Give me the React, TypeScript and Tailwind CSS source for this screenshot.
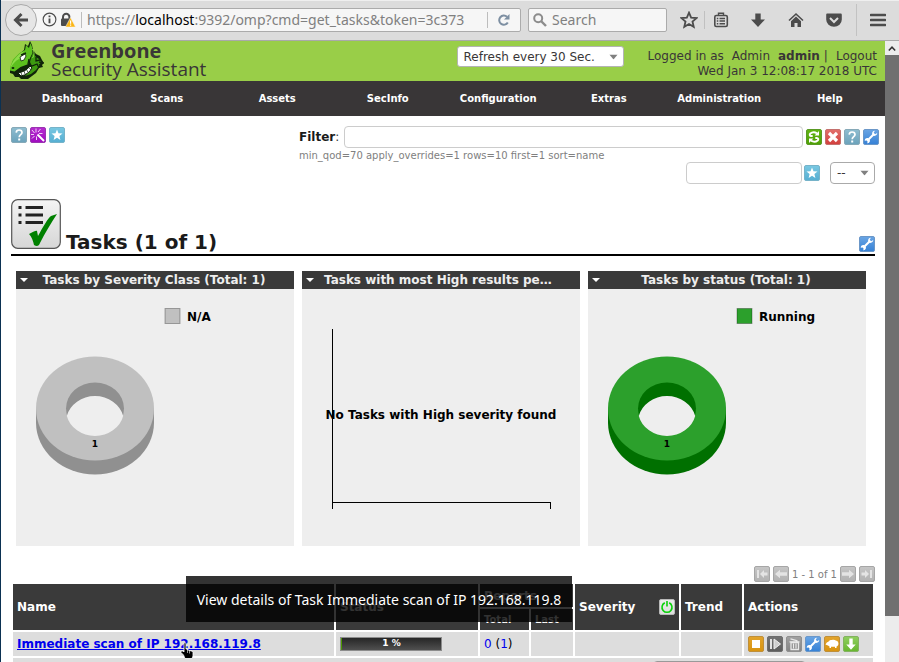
import React from "react";

type IconName =
  | "help" | "wizard" | "star" | "refresh" | "delete" | "wrench"
  | "first" | "prev" | "next" | "last"
  | "power" | "stop" | "resume" | "trash" | "clone" | "download";

const fills: Record<IconName, [string, string, string]> = {
  help: ["#8fbdd0", "#6ba2bb", "#86a9b8"],
  wizard: ["#b52bd0", "#a00cc0", "#9a35b0"],
  star: ["#79c8e2", "#56aed2", "#76b3c9"],
  refresh: ["#62b414", "#4fa005", "#5a9a25"],
  delete: ["#e2706c", "#d23f3c", "#c4716e"],
  wrench: ["#6aa5e4", "#3581d6", "#6b97c8"],
  first: ["#c6c6c6", "#b2b2b2", "#a6a6a6"],
  prev: ["#c6c6c6", "#b2b2b2", "#a6a6a6"],
  next: ["#c6c6c6", "#b2b2b2", "#a6a6a6"],
  last: ["#c6c6c6", "#b2b2b2", "#a6a6a6"],
  power: ["#ececec", "#dedede", "#b9b9b9"],
  stop: ["#e2a42c", "#d8930f", "#bf8f3a"],
  resume: ["#747474", "#5c5c5c", "#6e6e6e"],
  trash: ["#a2a2a2", "#858585", "#909090"],
  clone: ["#e2a42c", "#d8930f", "#bf8f3a"],
  download: ["#8fcf60", "#67b62e", "#83b261"],
};

const glyphs: Record<IconName, React.ReactNode> = {
  help: <g><path d="M5.2 5.6C5.3 3.9 6.4 3 8.1 3c1.700 0 2.900 1 2.900 2.500C11 7.600 8.200 7.700 8.200 10.200" fill="none" stroke="#fff" strokeWidth="1.700" /><rect x="7.200" y="11.500" width="2" height="2" fill="#fff" /></g>,
  wizard: <g stroke="#fff" fill="none"><path d="M7.500 7.500l6.500 6.500" strokeWidth="2" /><path d="M6 5.500V1.500M4.500 6L2 3M4 7.500H1M4.500 9L2 11.500M6.500 9.500V13M8 5l2.500-3M9 6.500h3.500" strokeWidth="1" strokeOpacity=".8" /></g>,
  star: <path d="M8 2.600l1.500 3.600 4 .3-3.100 2.500 1 3.900L8 10.800l-3.400 2.100 1-3.900-3.100-2.500 4-.3z" fill="#fff" />,
  refresh: <g fill="none" stroke="#fff" strokeWidth="2"><path d="M11 4.300C9 3.200 6 3.200 4.300 4.600c-1 .9-.5 2.500.8 2.500h1.600" /><path d="M5 11.700c2 1.100 5 1.100 6.700-.3 1-.9.500-2.500-.8-2.500H9.300" /><path d="M13 2v4.600H8.600zM3 14V9.400h4.400z" fill="#fff" stroke="none" /></g>,
  delete: <path d="M4 4l8 8M12 4l-8 8" stroke="#fff" strokeWidth="3.200" />,
  wrench: <g><path d="M4.200 11.800L11 5" stroke="#fff" strokeWidth="2" /><path d="M11.900 1.800c-1.900 0-3.200 1.600-2.700 3.600l1.400 1.400c2 .5 3.700-.9 3.600-2.700l-2 1.200-1.500-1.500zM4.800 9c-1.800-.3-3.300 1.100-3 3l1.500-.8 1.500 1.500-.8 1.500c1.900.3 3.300-1.300 2.900-3.100z" fill="#fff" /></g>,
  first: <path d="M3 4h2v8H3zM6 8l4-4v2.500h3.500v3H10V12z" fill="#e4e4e4" />,
  prev: <path d="M2 8l5-4.200v2.500h7v3.400H7v2.500z" fill="#e4e4e4" />,
  next: <path d="M14 8L9 3.800v2.500H2v3.400h7v2.500z" fill="#e4e4e4" />,
  last: <path d="M11 4h2v8h-2zM10 8L6 4v2.500H2.500v3H6V12z" fill="#e4e4e4" />,
  power: <g fill="none" stroke="#0bd10b" strokeWidth="1.600"><path d="M5.800 3.800a5 5 0 1 0 4.400 0" /><path d="M8 2v5.500" /></g>,
  stop: <rect x="4" y="4" width="8" height="8" fill="#fff" />,
  resume: <g><path d="M3 3h2v10H3z" fill="#e4e4e4" /><path d="M7 3l6.500 5L7 13z" fill="#cfcfcf" stroke="#eee" /></g>,
  trash: <g><path d="M5 6.500h7.500v7H5z" fill="none" stroke="#e9e9e9" strokeWidth="1.300" /><path d="M7.500 7.500v5M10 7.500v5M3.500 5.800h10M4.500 2.800l7 2" stroke="#e9e9e9" strokeWidth="1.200" /></g>,
  clone: <path d="M1.500 8.500L3 6.300l1.200-.4C5 4.500 6.500 4 8 4.100c1-.6 3-.4 3.800.5 2 .2 2.900 2 2.600 3.700-.2 1.200-1.100 2-1.900 2.200V12h-1.500v-1.300H7V12H5.500v-1.500L4 9.600z" fill="#fff" />,
  download: <path d="M6.300 2.500h3.400v6h3L8 13.800 3.300 8.500h3z" fill="#fff" />,
};

function Glyph({ name }: { name: IconName }) {
  const [top, bottom, edge] = fills[name];
  return (
    <svg viewBox="0 0 16 16" className="block size-4" aria-hidden="true">
      <defs>
        <linearGradient id={"grad-" + name} x1="0" y1="0" x2="0" y2="1">
          <stop offset="0" stopColor={top} />
          <stop offset="1" stopColor={bottom} />
        </linearGradient>
      </defs>
      <rect x=".5" y=".5" width="15" height="15" rx="1.500" fill={`url(#grad-${name})`} stroke={edge} />
      {glyphs[name]}
    </svg>
  );
}

function IconButton({ name, label }: { name: IconName; label: string }) {
  return (
    <button type="button" aria-label={label} className="block size-4 shrink-0">
      <Glyph name={name} />
    </button>
  );
}

function DragonLogo() {
  return (
    <svg viewBox="0 0 36 38" className="h-[38px] w-9 shrink-0" aria-hidden="true">
      <path d="M16 9l1-6 3 2 2-5 2 4 1 5 3 4 4 2 2 4 2 3-2 2 1 2-4 1-3 5-4 3-4 3-7 0-2-2-4 0-2-3-3-1 0-4 3-8 5-6z" fill="#10240a" />
      <path d="M17 9l1-5 3 3 1.500-5L24 6l.5 6-3 6-1 5-8 3-6 4.500-4.500-1 0-3 3-8 6-6z" fill="#5cc01e" />
      <path d="M16 10C10 13 4 20 2 28c2-4 5-8 9-10 3-2 3-6 5-8z" fill="#8ddc49" />
      <path d="M25 12l3 4 3 2 2 3-2 4-3 4-5 4-6 2 4-5 3-5-2-4 1-4z" fill="#3d9a10" />
      <path d="M24.500 8c2 3 2 6 0 9" stroke="#8ddc49" strokeWidth="1" fill="none" />
      <path d="M21 18l-1 5 4 2 5-2 2 4M28 16v4l4-1M31 21l4 1-4 2" fill="none" stroke="#10240a" strokeWidth="1.300" />
      <path d="M10 32c5-1 9-3 12-7l2 2c-2 4-6 7-11 8z" fill="#fff" stroke="#10240a" strokeWidth="1" />
      <path d="M13 31.500l1 3M16 30l1 3M18.500 28.500l1.500 3M21 26.500l2 2.500" stroke="#10240a" strokeWidth=".7" />
      <path d="M12 16l5-3 1 2-2 4-3 1z" fill="#fff" stroke="#10240a" strokeWidth=".8" />
      <path d="M13 14l5-2" stroke="#10240a" strokeWidth="1.500" />
      <ellipse cx="5" cy="27" rx="1.400" ry="1" fill="#10240a" />
    </svg>
  );
}

function SelectArrow() {
  return (
    <svg viewBox="0 0 10 6" className="pointer-events-none absolute right-1.5 top-1/2 h-[5px] w-[9px] -translate-y-1/2" aria-hidden="true">
      <path d="M0 0h10L5 6z" fill="#808080" />
    </svg>
  );
}

function BrowserBar() {
  return (
    <div className="flex h-[41px] shrink-0 items-center border-b border-t border-b-[#a9a9a9] border-t-[#efefef] bg-[#dcdcdc] pr-[13px] pb-0.5 pl-1 font-['Noto_Sans','DejaVu_Sans',sans-serif] text-[14px] text-[#808080]">
      <button type="button" aria-label="Back" className="relative z-10 flex size-8 shrink-0 items-center justify-center rounded-full border border-[#a9a9a9] bg-[#e6e6e6]">
        <svg viewBox="0 0 16 16" className="size-4"><path d="M8.500 2L2.500 8l6 6M3 8h12" fill="none" stroke="#4c4c4c" strokeWidth="3" /></svg>
      </button>
      <div className="-ml-2 flex h-6 min-w-0 flex-1 items-center rounded-r-xs border border-[#ababab] bg-[#f6f6f6] pr-2.5 pl-3">
        <svg viewBox="0 0 16 16" className="size-[15px] shrink-0"><circle cx="8" cy="8" r="6.800" fill="none" stroke="#4c4c4c" strokeWidth="1.200" /><path d="M7 3.700h2v1.800H7zM7 6.800h2V12H7z" fill="#4c4c4c" /></svg>
        <svg viewBox="0 0 16 16" className="ml-[3px] size-4 shrink-0">
          <path d="M3 7V5a3.200 3.200 0 0 1 6.400 0v2" fill="none" stroke="#4c4c4c" strokeWidth="2" />
          <rect x="1" y="6.500" width="10" height="7.500" rx="1" fill="#4c4c4c" />
          <path d="M10.500 5.500l5 9.500h-10z" fill="#fcb615" stroke="#f6f6f6" strokeWidth=".5" />
          <path d="M10 8.500h1.200v3.200H10zM10 12.500h1.200v1.200H10z" fill="#fff" />
        </svg>
        <span className="mx-[5px] h-4 w-px bg-[#bdbdbd]" />
        <div role="textbox" aria-label="Address" contentEditable suppressContentEditableWarning className="min-w-0 flex-1 overflow-hidden whitespace-nowrap outline-none">
          https://<span className="text-black">localhost</span>:9392/omp?cmd=get_tasks&amp;token=3c373
        </div>
        <span className="mr-2.5 h-4 w-px bg-[#bdbdbd]" />
        <button type="button" aria-label="Reload" className="size-3">
          <svg viewBox="0 0 12 12"><path d="M9.800 8.500A4.600 4.600 0 1 1 9 2.800" fill="none" stroke="#7d8fa2" strokeWidth="2" /><path d="M11.500 0v5.500H6z" fill="#7d8fa2" /></svg>
        </button>
      </div>
      <label className="ml-[7px] flex h-6 w-[139px] shrink-0 items-center rounded-xs border border-[#ababab] bg-[#f6f6f6] pl-1">
        <svg viewBox="0 0 14 14" className="size-3.5 shrink-0"><circle cx="5.200" cy="5.200" r="4" fill="none" stroke="#8c8c8c" strokeWidth="2" /><path d="M8 8l5 5" stroke="#8c8c8c" strokeWidth="2.400" /></svg>
        <input aria-label="Search" placeholder="Search" className="ml-[5px] w-full min-w-0 bg-transparent outline-none placeholder:text-[#808080]" />
      </label>
      <button type="button" aria-label="Bookmark" className="ml-[13px] size-[18px] shrink-0">
        <svg viewBox="0 0 16 16"><path d="M8 1.500l1.900 4.400 4.800.4-3.600 3.100 1.100 4.700L8 11.600l-4.200 2.500 1.100-4.700L1.300 6.300l4.800-.4z" fill="none" stroke="#4c4c4c" strokeWidth="1.600" /></svg>
      </button>
      <span className="ml-1.5 h-[18px] w-px bg-[#c0c0c0]" />
      <button type="button" aria-label="Bookmark list" className="ml-2 size-4 shrink-0">
        <svg viewBox="0 0 16 16"><rect x="1.800" y="3.500" width="12.500" height="11" rx="1.500" fill="none" stroke="#4c4c4c" strokeWidth="1.600" /><path d="M5.500 3V1.200h5V3" fill="none" stroke="#4c4c4c" strokeWidth="1.400" /><path d="M3.800 6.500h1.500M6.500 6.500H12M3.800 9h1.500M6.500 9H12M3.800 11.700h1.500M6.500 11.700H12" stroke="#4c4c4c" strokeWidth="1.500" /></svg>
      </button>
      <button type="button" aria-label="Downloads" className="ml-[21px] size-4 shrink-0">
        <svg viewBox="0 0 16 16"><path d="M5.300 1.500h5.400v6H15L8 15 1 7.500h4.300z" fill="#4c4c4c" /></svg>
      </button>
      <button type="button" aria-label="Home" className="ml-[22px] size-4 shrink-0">
        <svg viewBox="0 0 16 16"><path d="M1 8.500L8 2l7 6.500" fill="none" stroke="#4c4c4c" strokeWidth="1.600" /><path d="M8 4.600l5 4.700V15H9.500v-4h-3v4H3V9.300z" fill="#4c4c4c" /></svg>
      </button>
      <button type="button" aria-label="Pocket" className="ml-[22px] size-4 shrink-0">
        <svg viewBox="0 0 16 16"><path d="M1.500 1.500h13c.8 0 1.300.5 1.300 1.300V7.500a7.800 7.300 0 0 1-15.600 0V2.800c0-.8.500-1.300 1.300-1.300z" fill="#4c4c4c" /><path d="M4 6l4 4 4-4" fill="none" stroke="#dcdcdc" strokeWidth="2" /></svg>
      </button>
      <span className="ml-3.5 h-8 w-px bg-[#c2c2c2]" />
      <button type="button" aria-label="Menu" className="ml-[13px] size-4 shrink-0">
        <svg viewBox="0 0 16 16"><path d="M1 3h14M1 8h14M1 13h14" stroke="#4c4c4c" strokeWidth="2.600" strokeLinecap="round" /></svg>
      </button>
    </div>
  );
}

function Header() {
  return (
    <header className="flex h-10 justify-between bg-[#99ce48] pr-2 pl-[7px] text-[#393637]">
      <div className="flex">
        <DragonLogo />
        <div className="ml-[7px] font-['Open_Sans','Noto_Sans',sans-serif]">
          <div className="text-[20px] leading-5 font-bold">Greenbone</div>
          <div className="text-[19px] leading-4">Security Assistant</div>
        </div>
      </div>
      <div className="flex">
        <div className="relative mt-[5px] h-[21px]">
          <select aria-label="Refresh interval" className="block h-[21px] w-[167px] appearance-none rounded-[3px] border border-[#b4b4b4] bg-white pl-1.5 text-[12px] text-[#393637]">
            <option>Refresh every 30 Sec.</option>
          </select>
          <SelectArrow />
        </div>
        <div className="ml-6 pt-2 text-right text-[12px] leading-[15px] whitespace-nowrap">
          <div className="flex justify-end">
            <span>Logged in as</span>
            <a href="#role" className="ml-2">Admin</a>
            <a href="#user" className="ml-2 font-bold">admin</a>
            <span className="ml-1">|</span>
            <a href="#logout" className="ml-2">Logout</a>
          </div>
          <div>Wed Jan 3 12:08:17 2018 UTC</div>
        </div>
      </div>
    </header>
  );
}

const menu = ["Dashboard", "Scans", "Assets", "SecInfo", "Configuration", "Extras", "Administration", "Help"];

function Nav() {
  return (
    <nav className="grid h-[35px] grid-cols-8 items-center bg-[#393637] text-center text-[10px] font-bold text-white">
      {menu.map((item) => (
        <a key={item} href={"#" + item.toLowerCase()} className="first:pl-8">{item}</a>
      ))}
    </nav>
  );
}

function Filter() {
  return (
    <div className="flex">
      <div className="flex w-72 shrink-0 gap-[3px] pt-px">
        <IconButton name="help" label="Help" />
        <IconButton name="wizard" label="Task wizard" />
        <IconButton name="star" label="New task" />
      </div>
      <form className="-mr-1 min-w-0 flex-1">
        <div className="flex items-center gap-[3px]">
          <label htmlFor="filter" className="w-[42px] shrink-0 text-[12px] text-[#393637]"><b className="text-[#1a1a1a]">Filter</b>:</label>
          <input id="filter" className="h-[22px] min-w-0 flex-1 rounded-[4px] border border-[#ccc]" />
          <IconButton name="refresh" label="Update filter" />
          <IconButton name="delete" label="Reset filter" />
          <IconButton name="help" label="Filter help" />
          <IconButton name="wrench" label="Edit filter" />
        </div>
        <p className="pt-px text-[10px] leading-[13px] text-[#808080]">min_qod=70 apply_overrides=1 rows=10 first=1 sort=name</p>
        <div className="flex items-center justify-end pr-1">
          <input aria-label="Filter name" className="mr-0.5 h-[22px] w-[116px] rounded-[4px] border border-[#ccc]" />
          <IconButton name="star" label="Save filter" />
          <div className="relative ml-2.5 h-[22px]">
            <select aria-label="Saved filters" className="block h-[22px] w-[45px] appearance-none rounded-[4px] border border-[#aaa] bg-white pl-1.5 text-[12px] text-[#393637]">
              <option>--</option>
            </select>
            <SelectArrow />
          </div>
        </div>
      </form>
    </div>
  );
}

function TaskIcon() {
  return (
    <svg viewBox="0 0 50 50" className="size-[50px]" aria-hidden="true">
      <defs>
        <linearGradient id="tile" x1="0" y1="0" x2="0" y2="1">
          <stop offset="0" stopColor="#f4f4f4" />
          <stop offset="1" stopColor="#d6d6d6" />
        </linearGradient>
      </defs>
      <rect x=".700" y=".700" width="48.600" height="48.600" rx="6" fill="url(#tile)" stroke="#555" strokeWidth="1.200" />
      <path d="M7.500 7h3v3h-3zM14.500 7h17.500v3H14.500zM7.500 14.500h3v3h-3zM14.500 14.500h17.500v3H14.500zM7.500 22h3v3h-3zM14.500 22h17.500v3H14.500z" fill="#222" />
      <path d="M18 35c3-1 6-4 8-3l1 5c5-9 10-18 13-20l6-2C40 24 34 34 29 44c-1 3-3 4-6 2-1-4-2-8-5-11z" fill="#008000" />
    </svg>
  );
}

function ChartPanel({ title, children }: { title: string; children: React.ReactNode }) {
  return (
    <section className="min-w-0 bg-[#eeeeee]">
      <h2 className="flex h-[18px] items-center bg-[#3a3a3a] pr-1 pl-1 text-[12px] font-bold text-[#eeeeee]">
        <button type="button" aria-label="Choose chart" className="w-2 shrink-0">
          <svg viewBox="0 0 8 4" className="h-1 w-2"><path d="M0 0h8L4 4z" fill="#fff" /></svg>
        </button>
        <span className="min-w-0 flex-1 truncate pr-5 pl-2.5 text-center">{title}</span>
      </h2>
      <svg viewBox="0 0 278 257" className="block h-[257px] w-full font-bold">{children}</svg>
    </section>
  );
}

function Donut({ label, top, side }: { label: string; top: string; side: string }) {
  return (
    <g>
      <rect x="149" y="19.500" width="15" height="15" fill={top} stroke="#000" strokeOpacity=".3" />
      <text x="171" y="32" fontSize="12">{label}</text>
      <path fill={side} d="M20 119.500v14a59 52 0 0 0 118 0v-14z" />
      <path fillRule="evenodd" fill={top} d="M20 119.500a59 52 0 0 1 118 0a59 52 0 0 1-118 0z" />
      <path fill={side} d="M50 119.500a29 26 0 0 1 58 0a29 26 0 0 1-58 0z" />
      <path fill="#eeeeee" d="M50.800 127a29 26 0 0 1 56.400 0a29 26 0 0 1-56.400 0z" />
      <text x="79" y="158" fontSize="9" textAnchor="middle">1</text>
    </g>
  );
}

const th = "bg-[#3a3a3a] px-1 text-left font-bold text-white";
const td = "h-6 bg-[#dddddd] px-1";

function TaskTable() {
  return (
    <table className="w-full table-fixed border-separate border-spacing-[2px] text-[12px]">
      <colgroup>
        <col />
        <col className="w-[142px]" />
        <col className="w-[49px]" />
        <col className="w-[42px]" />
        <col className="w-[104px]" />
        <col className="w-[61px]" />
        <col className="w-[129px]" />
      </colgroup>
      <thead>
        <tr className="h-[23px]">
          <th rowSpan={2} className={th}>Name</th>
          <th rowSpan={2} className={th}>Status</th>
          <th colSpan={2} className={th}>Reports</th>
          <th rowSpan={2} className={th}>
            <div className="flex items-center justify-between">Severity<IconButton name="power" label="Toggle overrides" /></div>
          </th>
          <th rowSpan={2} className={th}>Trend</th>
          <th rowSpan={2} className={th}>Actions</th>
        </tr>
        <tr className="h-[21px] text-[10px]">
          <th className={th}>Total</th>
          <th className={th}>Last</th>
        </tr>
      </thead>
      <tbody>
        <tr>
          <td className={td}><a href="#task" className="font-bold text-[#0000ee] underline">Immediate scan of IP 192.168.119.8</a></td>
          <td className={td}>
            <div role="progressbar" aria-label="Scan progress" aria-valuenow={1} className="h-3.5 w-[102px] border border-[#8c8c8c]">
              <div className="flex h-3 items-center justify-center border-l border-[#4c9a00] bg-linear-to-b from-[#262626] to-[#505050] text-[9px] font-bold text-white">1 %</div>
            </div>
          </td>
          <td className={td}><a href="#reports" className="text-[#0000ee]">0</a> (<a href="#all" className="text-[#0000ee]">1</a>)</td>
          <td className={td} />
          <td className={td} />
          <td className={td} />
          <td className={td}>
            <div className="flex gap-[3px]">
              <IconButton name="stop" label="Stop" />
              <IconButton name="resume" label="Resume" />
              <IconButton name="trash" label="Move to trashcan" />
              <IconButton name="wrench" label="Edit" />
              <IconButton name="clone" label="Clone" />
              <IconButton name="download" label="Export" />
            </div>
          </td>
        </tr>
        <tr>
          <td colSpan={7} className="h-7 bg-[#dddddd] pt-[3px] pr-[67px] align-top">
            <select aria-label="Apply to" className="ml-auto block h-[22px] w-[153px] appearance-none rounded-[4px] border border-[#999] bg-white pl-1.5">
              <option>Apply to page contents</option>
            </select>
          </td>
        </tr>
      </tbody>
    </table>
  );
}

function LinkTooltip() {
  return (
    <>
      <div role="tooltip" className="absolute top-[-6px] left-[175px] flex h-[46px] w-[386px] items-center justify-center bg-black/80 font-['Noto_Sans','DejaVu_Sans',sans-serif] text-[14px] whitespace-nowrap text-white">
        View details of Task Immediate scan of IP 192.168.119.8
      </div>
      <svg viewBox="0 0 14 17" className="absolute top-[60px] left-[169px] h-[17px] w-3.5" aria-hidden="true">
        <path d="M4 1.500C4 .5 6 .5 6 1.500V7h1.500v1H9v.5h1.500V9H12l1 1.500V14l-1 2.500H5L3.500 13 1 10.500V9h2l1 1z" fill="#000" stroke="#fff" strokeWidth=".8" />
        <path d="M7.500 8v3M9.500 9v2.500" stroke="#fff" strokeWidth=".6" />
      </svg>
    </>
  );
}

export default function App() {
  return (
    <div className="flex h-screen flex-col overflow-hidden border-l border-[#0b3152] bg-white font-['DejaVu_Sans','Noto_Sans',sans-serif]">
      <BrowserBar />
      <div className="flex min-h-0 flex-1">
        <div className="min-w-0 flex-1 overflow-hidden">
          <Header />
          <Nav />
          <main className="px-2.5 pt-2.5">
            <Filter />
            <div className="mt-[15px] flex items-end border-b-2 border-black pb-[5px]">
              <TaskIcon />
              <h1 className="ml-[5px] flex-1 text-[20px] leading-[14px] font-bold text-[#1a1a1a]">Tasks (1 of 1)</h1>
              <div className="-mb-[3px]"><IconButton name="wrench" label="Edit dashboard" /></div>
            </div>
            <div className="mt-[15px] grid grid-cols-3 gap-2 pr-[9px] pl-[5px]">
              <ChartPanel title="Tasks by Severity Class (Total: 1)">
                <Donut label="N/A" top="#c0c0c0" side="#909090" />
              </ChartPanel>
              <ChartPanel title="Tasks with most High results per host">
                <path d="M30.500 40v180M30.500 213.500h218v6.500" fill="none" stroke="#000" shapeRendering="crispEdges" />
                <text x="139" y="130" fontSize="12" textAnchor="middle">No Tasks with High severity found</text>
              </ChartPanel>
              <ChartPanel title="Tasks by status (Total: 1)">
                <Donut label="Running" top="#2ca02c" side="#007000" />
              </ChartPanel>
            </div>
            <div className="mt-5 flex h-4 items-center justify-end gap-[3px] text-[10px] text-[#808080]">
              <IconButton name="first" label="First page" />
              <IconButton name="prev" label="Previous page" />
              <span>1 - 1 of 1</span>
              <IconButton name="next" label="Next page" />
              <IconButton name="last" label="Last page" />
            </div>
            <div className="relative">
              <TaskTable />
              <LinkTooltip />
            </div>
          </main>
        </div>
        <div className="flex w-3.5 shrink-0 flex-col bg-[#ececec]">
          <button type="button" aria-label="Scroll up" className="flex h-3.5 shrink-0 items-center justify-center">
            <svg viewBox="0 0 8 5" className="h-[5px] w-2"><path d="M.8 4.500L4 1.200l3.200 3.300" fill="none" stroke="#333" strokeWidth="1.500" /></svg>
          </button>
          <div className="h-[561px] bg-[#707070]" />
        </div>
      </div>
    </div>
  );
}
